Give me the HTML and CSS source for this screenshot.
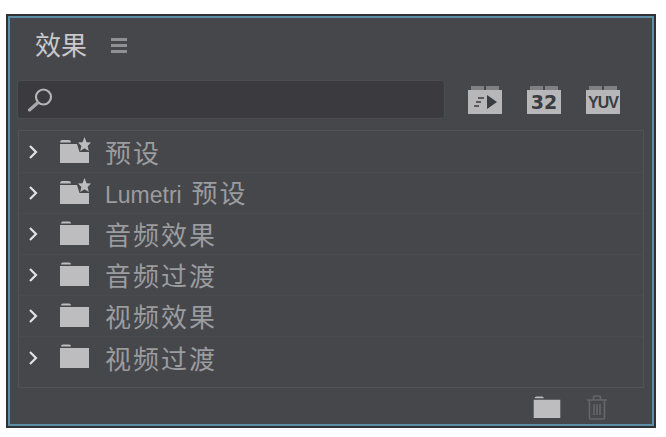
FILE: index.html
```html
<!DOCTYPE html>
<html lang="zh-CN">
<head>
    <meta charset="UTF-8">
    <meta name="viewport" content="width=device-width, initial-scale=1.0">
    <title>效果</title>
    <link rel="stylesheet" href="styles.css">
</head>
<body>

    <svg class="defs" width="0" height="0">
        <symbol id="chevron" viewBox="0 0 10 16">
            <path d="M2 2 L8 8 L2 14" fill="none" stroke="currentColor" stroke-width="2.2"/>
        </symbol>
        <symbol id="folder" viewBox="0 0 29 24">
            <path d="M1 2.500 Q1 0.500 3 0.500 H9 Q11 0.500 11 2.500 Z M0 4 H29 V24 H0 Z" fill="currentColor"/>
        </symbol>
        <symbol id="folder-star" viewBox="0 0 31 26">
            <path d="M0 5.500 Q0 3 2 3 H9 Q11 3 11 5.500 Z M0 7 H17 L19.500 15 H29 V26 H0 Z" fill="currentColor"/>
            <path d="M24.500 0 L26.500 5.200 L31 5.600 L27.600 9 L28.800 14 L24.500 11.200 L20.200 14 L21.400 9 L18 5.600 L22.500 5.200 Z" fill="currentColor"/>
        </symbol>
    </svg>

    <div class="panel">
        <!-- Header -->
        <header class="panel-head">
            <h1>效果</h1>
            <div class="menu"><span></span><span></span><span></span></div>
        </header>

        <!-- Search and filters -->
        <div class="tools">
            <div class="search">
                <svg width="26" height="24" viewBox="0 0 26 24">
                    <circle cx="16.500" cy="9" r="7.500" fill="none" stroke="#b4b4b6" stroke-width="2.200"/>
                    <path d="M10.500 15 L2.500 22" stroke="#a9a9ab" stroke-width="3.200" stroke-linecap="round"/>
                </svg>
            </div>
            <div class="badges">
                <div class="badge">
                    <svg width="26" height="16" viewBox="0 0 26 16">
                        <path d="M6 4 H12 M4 8 H9 M2 12 H7" stroke="#5a5b5f" stroke-width="2"/>
                        <path d="M15 1 L25 8 L15 15 Z" fill="#3b3c40"/>
                    </svg>
                </div>
                <div class="badge num">32</div>
                <div class="badge yuv">YUV</div>
            </div>
        </div>

        <!-- Effect folders -->
        <ul class="tree">
            <li><svg class="chev"><use href="#chevron"/></svg><svg class="ico star"><use href="#folder-star"/></svg><span>预设</span></li>
            <li><svg class="chev"><use href="#chevron"/></svg><svg class="ico star"><use href="#folder-star"/></svg><span><b>Lumetri</b> 预设</span></li>
            <li><svg class="chev"><use href="#chevron"/></svg><svg class="ico"><use href="#folder"/></svg><span>音频效果</span></li>
            <li><svg class="chev"><use href="#chevron"/></svg><svg class="ico"><use href="#folder"/></svg><span>音频过渡</span></li>
            <li><svg class="chev"><use href="#chevron"/></svg><svg class="ico"><use href="#folder"/></svg><span>视频效果</span></li>
            <li><svg class="chev"><use href="#chevron"/></svg><svg class="ico"><use href="#folder"/></svg><span>视频过渡</span></li>
        </ul>

        <!-- Footer -->
        <footer class="panel-foot">
            <svg class="new-folder" width="28" height="22"><use href="#folder"/></svg>
            <svg width="22" height="25" viewBox="0 0 22 25" fill="none" stroke="#65666a" stroke-width="1.6">
                <path d="M1 5 H21 M7.500 5 V2 Q7.500 1 9 1 H13 Q14.500 1 14.500 2 V5"/>
                <path d="M3.500 5 V23 Q3.500 24 5 24 H17 Q18.500 24 18.500 23 V5"/>
                <path d="M8 9 V20 M11 9 V20 M14 9 V20"/>
            </svg>
        </footer>
    </div>

</body>
</html>
```

FILE: styles.css
```css
html, body {
    margin: 0;
    padding: 0;
    height: 100%;
    overflow: hidden;
    background-color: #ffffff;
}

body {
    padding: 14px 10px 9px 6px;
    box-sizing: border-box;
    font-family: "Noto Sans CJK SC", "Liberation Sans", sans-serif;
}

.defs {
    position: absolute;
}

/* Panel frame */
.panel {
    height: 100%;
    box-sizing: border-box;
    background-color: #46474b;
    border: 2px solid #2f3134;
    outline: 2px solid #5c8ea8;
    outline-offset: -4px;
    padding: 2px 9px 0 9px;
    display: flex;
    flex-direction: column;
}

/* Header */
.panel-head {
    height: 62px;
    box-sizing: border-box;
    padding: 0 0 10px 18px;
    display: flex;
    align-items: center;
    gap: 24px;
    flex-shrink: 0;
}

.panel-head h1 {
    margin: 0;
    font-size: 26px;
    font-weight: 400;
    line-height: 1;
    color: #c9c9cb;
}

.menu {
    width: 16px;
    display: flex;
    flex-direction: column;
    gap: 3px;
    margin-top: 2px;
}

.menu span {
    height: 3px;
    background-color: #8f9092;
}

/* Search row */
.tools {
    height: 39px;
    display: flex;
    align-items: center;
    flex-shrink: 0;
}

.search {
    width: 428px;
    height: 39px;
    box-sizing: border-box;
    background-color: #3b3b3f;
    border: 1px solid #4c4d51;
    border-radius: 4px;
    display: flex;
    align-items: center;
    padding-left: 9px;
}

.badges {
    display: flex;
    gap: 25px;
    margin-left: 23px;
}

.badge {
    position: relative;
    width: 34px;
    height: 24px;
    margin-top: 4px;
    background-color: #b7b7b9;
    color: #3b3c40;
    display: flex;
    align-items: center;
    justify-content: center;
    font-family: "DejaVu Sans", sans-serif;
}

.badge::before {
    content: "";
    position: absolute;
    left: 3px;
    right: 3px;
    top: -4px;
    height: 4px;
    background: linear-gradient(to right, #7f8083 46%, transparent 46%, transparent 54%, #7f8083 54%);
}

.num {
    font-size: 19px;
    font-weight: 700;
    line-height: 24px;
}

.yuv {
    font-family: "Liberation Sans", sans-serif;
    font-size: 16px;
    font-weight: 700;
    letter-spacing: -1px;
    line-height: 16px;
    padding-top: 3px;
    height: 21px;
}

/* Tree */
.tree {
    list-style: none;
    margin: 11px 0 0 1px;
    padding: 1px 0 10px 0;
    width: 626px;
    height: 258px;
    box-sizing: border-box;
    border: 1px solid #515256;
    flex-shrink: 0;
}

.tree li {
    height: 41px;
    box-sizing: border-box;
    display: flex;
    align-items: center;
    border-bottom: 1px solid #4a4b4f;
    color: #9b9c9f;
    font-size: 26px;
    letter-spacing: 2px;
    line-height: 1;
}

.tree li:last-child {
    border-bottom: 0;
}

.tree b {
    font-family: "Liberation Sans", sans-serif;
    font-size: 23px;
    font-weight: 400;
    letter-spacing: 0;
    margin-right: 2px;
}

.chev {
    width: 10px;
    height: 16px;
    margin-left: 9px;
    color: #e2e2e3;
    flex-shrink: 0;
}

.ico {
    width: 29px;
    height: 24px;
    margin-left: 22px;
    margin-top: -3px;
    color: #bdbdbf;
    flex-shrink: 0;
}

.ico.star {
    width: 31px;
    height: 26px;
    margin-top: -5px;
}

.tree span {
    margin-left: 16px;
}

.ico.star + span {
    margin-left: 14px;
}

/* Footer */
.panel-foot {
    flex: 1;
    display: flex;
    align-items: center;
    justify-content: flex-end;
    gap: 25px;
    padding-right: 37px;
}

.new-folder {
    color: #bdbdbf;
}
```
